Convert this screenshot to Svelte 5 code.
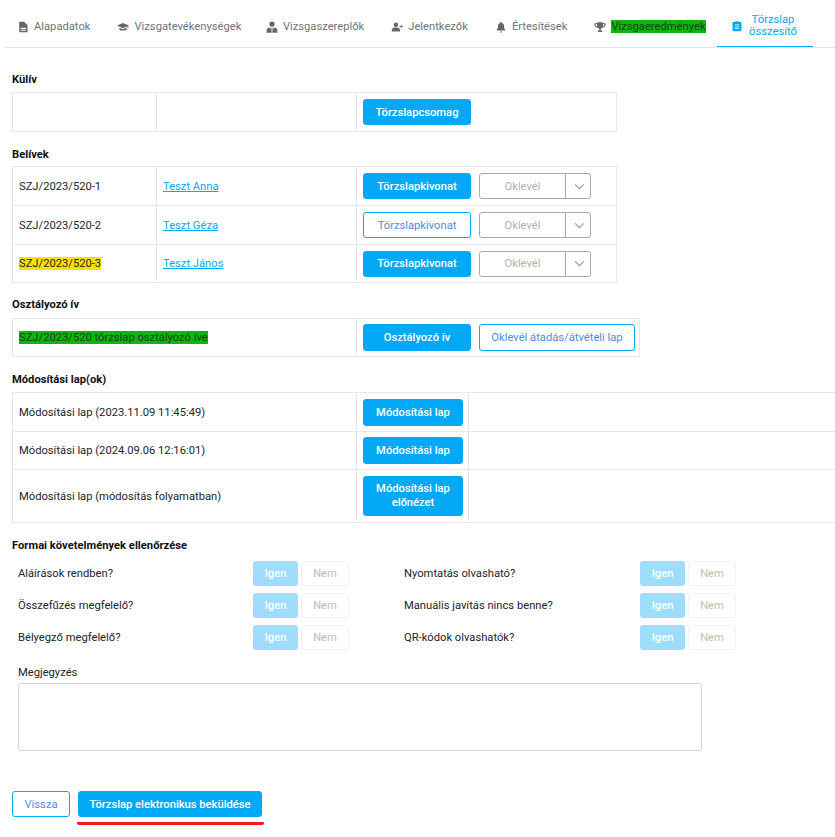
<script>
	const tabs = [
		{ label: 'Alapadatok', icon: 'doc' },
		{ label: 'Vizsgatevékenységek', icon: 'cap' },
		{ label: 'Vizsgaszereplők', icon: 'person' },
		{ label: 'Jelentkezők', icon: 'add' },
		{ label: 'Értesítések', icon: 'bell' },
		{ label: 'Vizsgaeredmények', icon: 'cup', mark: true }
	];
	const icons = {
		doc: 'M3 1h6.500L14 5.500V15H3V1z M5 9v1.500h7V9z M5 11.500V13h7v-1.500z',
		cap: 'M8 2.500 0 6l8 3.500L14 6.900V10h1V6.400L16 6z M3.200 9v2.500c1.500 1.600 8.100 1.600 9.600 0V9L8 11z',
		person: 'M8 .5a3.500 3.500 0 1 1 0 7 3.500 3.500 0 0 1 0-7z M1 15.500V12c0-2 1.800-3.400 4-3.400L7 11l-.5 4.500z M15 15.500V12c0-2-1.800-3.400-4-3.400L9 11l.5 4.500z M7.200 8.600h1.600l-.4 2.400.6 4.500H7l.6-4.500z',
		add: 'M6.500 2a3 3 0 1 1 0 6 3 3 0 0 1 0-6z M1 14v-1.800C1 10 3 8.800 4.500 8.800h4C10 8.800 12 10 12 12.200V14z M13 5h1v2h2v1h-2v2h-1V8h-2V7h2z',
		bell: 'M8 1c.6 0 1 .4 1 1v.6c2 .5 3 2 3 4 0 3 .8 4.200 1.800 5.200v1H2.200v-1C3.200 10.800 4 9.600 4 6.600c0-2 1-3.500 3-4V2c0-.6.4-1 1-1z M6.500 14h3a1.500 1.500 0 0 1-3 0z',
		cup: 'M4 1.500h8V3h3.500v2c0 2-1.500 3.500-4 3.700-.5.800-1.300 1.400-2.500 1.600V12.500h2V14.500H5V12.500h2V10.300C5.800 10.100 5 9.500 4.500 8.700 2 8.500.5 7 .5 5V3H4z M2 4.200V5c0 1.200.8 2.100 2.100 2.400-.1-1-.1-2.100-.1-3.200z M14 4.200H12c0 1.100 0 2.200-.1 3.200C13.200 7.100 14 6.200 14 5z'
	};
	const belivek = [
		{ id: 'SZJ/2023/520-1', name: 'Teszt Anna', outline: false, mark: false },
		{ id: 'SZJ/2023/520-2', name: 'Teszt Géza', outline: true, mark: false },
		{ id: 'SZJ/2023/520-3', name: 'Teszt János', outline: false, mark: true }
	];
	const checks = [
		'Aláírások rendben?',
		'Nyomtatás olvasható?',
		'Összefűzés megfelelő?',
		'Manuális javítás nincs benne?',
		'Bélyegző megfelelő?',
		'QR-kódok olvashatók?'
	];
</script>

<div class="page">
	<nav class="tabs">
		{#each tabs as t}
			<div class="tab">
				<svg viewBox="0 0 16 16" width="12" height="12"><path d={icons[t.icon]} fill-rule="evenodd" /></svg>
				<span class:green={t.mark}>{t.label}</span>
			</div>
		{/each}
		<div class="tab active">
			<svg viewBox="0 0 16 16" width="12" height="12"><path d="M3 2.500h2.500V1.500h5v1H13a1 1 0 0 1 1 1V14a1 1 0 0 1-1 1H3a1 1 0 0 1-1-1V3.500a1 1 0 0 1 1-1z M5 6v1h6V6z M5 8.500v1h6v-1z M5 11v1h6v-1z" fill-rule="evenodd" /></svg>
			<span>Törzslap<br />összesítő</span>
		</div>
	</nav>

	<h4 class="h-kuliv">Külív</h4>
	<div class="tbl">
		<div class="row r-kuliv">
			<div class="cell"></div>
			<div class="cell"></div>
			<div class="cell btns"><button class="btn w108">Törzslapcsomag</button></div>
		</div>
	</div>

	<h4 class="h-beliv">Belívek</h4>
	<div class="tbl">
		{#each belivek as b}
			<div class="row r-beliv">
				<div class="cell"><span class:yellow={b.mark}>{b.id}</span></div>
				<div class="cell"><a href="#top">{b.name}</a></div>
				<div class="cell btns">
					<button class="btn w108" class:outline={b.outline}>Törzslapkivonat</button>
					<div class="split">
						<span class="split-main">Oklevél</span>
						<span class="split-arrow">
							<svg viewBox="0 0 12 8" width="11" height="7"><path d="M1 1.500 6 6.500 11 1.500" /></svg>
						</span>
					</div>
				</div>
			</div>
		{/each}
	</div>

	<h4 class="h-oszt">Osztályozó ív</h4>
	<div class="tbl oszt">
		<div class="row r-oszt">
			<div class="cell"><span class="green">SZJ/2023/520 törzslap osztályozó íve</span></div>
			<div class="cell btns">
				<button class="btn w108 h27">Osztályozó ív</button>
				<button class="btn outline w156 h27">Oklevél átadás/átvételi lap</button>
			</div>
		</div>
	</div>

	<h4 class="h-mod">Módosítási lap(ok)</h4>
	<div class="tbl full">
		<div class="row r-mod first">
			<div class="cell">Módosítási lap (2023.11.09 11:45:49)</div>
			<div class="cell btns"><button class="btn w100 h27">Módosítási lap</button></div>
			<div class="cell"></div>
		</div>
		<div class="row r-mod">
			<div class="cell">Módosítási lap (2024.09.06 12:16:01)</div>
			<div class="cell btns"><button class="btn w100 h27">Módosítási lap</button></div>
			<div class="cell"></div>
		</div>
		<div class="row r-mod last">
			<div class="cell">Módosítási lap (módosítás folyamatban)</div>
			<div class="cell btns"><button class="btn w100 tall">Módosítási lap<br />előnézet</button></div>
			<div class="cell"></div>
		</div>
	</div>

	<h4 class="h-formai">Formai követelmények ellenőrzése</h4>
	<div class="checks">
		{#each checks as c}
			<div class="check">
				<span class="check-label">{c}</span>
				<span class="yes">Igen</span>
				<span class="no">Nem</span>
			</div>
		{/each}
	</div>

	<label class="note">
		<span>Megjegyzés</span>
		<textarea></textarea>
	</label>

	<div class="actions">
		<button class="btn outline back">Vissza</button>
		<div class="send">
			<button class="btn send-btn">Törzslap elektronikus beküldése</button>
		</div>
	</div>
</div>

<style>
	:global(body) {
		margin: 0;
		background: #fff;
	}

	.page {
		width: 835px;
		height: 837px;
		overflow: hidden;
		font-family: Roboto, "Liberation Sans", sans-serif;
		font-size: 11.2px;
		color: #212529;
		box-sizing: border-box;
		padding: 0 0 0 12px;
	}

	/* --- Tabs --- */
	.tabs {
		display: flex;
		align-items: stretch;
		height: 47px;
		margin-left: -8px;
		padding-left: 13px;
		gap: 27px;
		border-bottom: 1px solid #e4e4e4;
	}
	.tab {
		display: flex;
		align-items: center;
		gap: 5px;
		color: #6c757d;
		padding-top: 6px;
		white-space: nowrap;
	}
	.tab:nth-child(3) { margin-left: -2.500px; }
	.tab svg { fill: #666; flex: none; }
	.tab.active {
		color: #03a9f4;
		width: 96px;
		box-sizing: border-box;
		padding-left: 14px;
		margin-left: -15.500px;
		text-align: center;
		line-height: 12px;
		border-bottom: 1px solid #03a9f4;
		gap: 6px;
	}
	.tab.active svg { fill: #03a9f4; }
	.green { background: #0db50d; color: #1c3d1c; }
	.yellow { background: #ffe000; }

	/* --- Headings --- */
	h4 {
		font-size: 11.2px;
		line-height: 16px;
		font-weight: 700;
		color: #111;
	}
	.h-kuliv { margin: 24px 0 4px; }
	.h-beliv { margin: 15px 0 3px; }
	.h-oszt { margin: 14px 0 5px; }
	.h-mod { margin: 15px 0 4px; }
	.h-formai { margin: 15px 0 7px; }

	/* --- Tables --- */
	.tbl {
		width: 605px;
		box-sizing: border-box;
		border: 1px solid #e8e8e8;
		border-bottom: 0;
	}
	.tbl.oszt { width: 628px; }
	.tbl.full { width: 823px; border-right: 0; }
	.row {
		display: grid;
		grid-template-columns: 144px 200px 1fr;
		border-bottom: 1px solid #e8e8e8;
	}
	.r-kuliv { height: 38px; }
	.r-beliv { height: 38px; }
	.r-beliv:last-child { height: 37px; }
	.r-oszt {
		grid-template-columns: 344px 1fr;
		height: 37px;
	}
	.r-mod { grid-template-columns: 344px 112px 1fr; height: 37px; }
	.r-mod.first { height: 38px; }
	.r-mod.last { height: 52px; }
	.cell {
		display: flex;
		align-items: center;
		padding: 0 6px;
		border-right: 1px solid #e8e8e8;
		box-sizing: border-box;
	}
	.cell:last-child { border-right: 0; }
	.btns { gap: 8px; }
	a {
		color: #03a9f4;
		text-decoration: underline;
	}

	/* --- Buttons --- */
	.btn {
		font: inherit;
		font-weight: 500;
		height: 26px;
		padding: 0;
		background: #03a9f4;
		color: #fff;
		border: 1px solid #03a9f4;
		border-radius: 3px;
		box-sizing: border-box;
		flex: none;
	}
	.btn.outline {
		background: #fff;
		color: #4d8fd6;
		font-weight: 400;
	}
	.h27 { height: 27px; }
	.w108 { width: 108px; }
	.w156 { width: 156px; }
	.w100 { width: 100px; }
	.tall { height: 40px; line-height: 14px; }
	.split {
		display: flex;
		width: 112px;
		height: 26px;
		box-sizing: border-box;
		border: 1px solid #aaa;
		border-radius: 3px;
		color: #b5b0b0;
	}
	.split-main {
		flex: 1;
		display: flex;
		align-items: center;
		justify-content: center;
		border-right: 1px solid #aaa;
	}
	.split-arrow {
		width: 20px;
		display: flex;
		align-items: center;
		justify-content: center;
		flex: none;
		margin-left: 3px;
		margin-right: 1px;
	}
	.split-arrow svg { fill: none; stroke: #999; stroke-width: 1.200; }

	/* --- Checks --- */
	.checks {
		display: grid;
		grid-template-columns: 386px 1fr;
		row-gap: 7px;
		padding-left: 6px;
	}
	.check {
		display: flex;
		align-items: center;
		height: 25px;
	}
	.check-label { width: 235px; flex: none; }
	.check:nth-child(even) .check-label { width: 236px; }
	.yes, .no {
		display: flex;
		align-items: center;
		justify-content: center;
		height: 25px;
		box-sizing: border-box;
		border-radius: 3px;
		font-weight: 500;
	}
	.yes {
		width: 45px;
		background: #a0dcfb;
		color: #fff;
	}
	.no {
		width: 48px;
		margin-left: 3px;
		border: 1px solid #f1f1f1;
		color: #bbb;
		font-weight: 400;
	}

	/* --- Note --- */
	.note {
		display: block;
		margin: 15px 0 0 6px;
	}
	.note span { display: block; line-height: 16px; }
	textarea {
		display: block;
		width: 684px;
		height: 68px;
		margin-top: 2px;
		box-sizing: border-box;
		border: 1px solid #d5d5d5;
		border-radius: 3px;
		resize: none;
		outline: none;
	}

	/* --- Actions --- */
	.actions {
		display: flex;
		gap: 8px;
		margin-top: 40px;
		align-items: flex-start;
	}
	.back { width: 58px; }
	.send {
		width: 187px;
		margin-left: -1px;
		padding-left: 1px;
		padding-bottom: 5px;
		box-sizing: border-box;
		border-bottom: 3px solid #ee1c25;
		border-radius: 2px;
	}
	.send-btn { width: 184px; }
</style>
